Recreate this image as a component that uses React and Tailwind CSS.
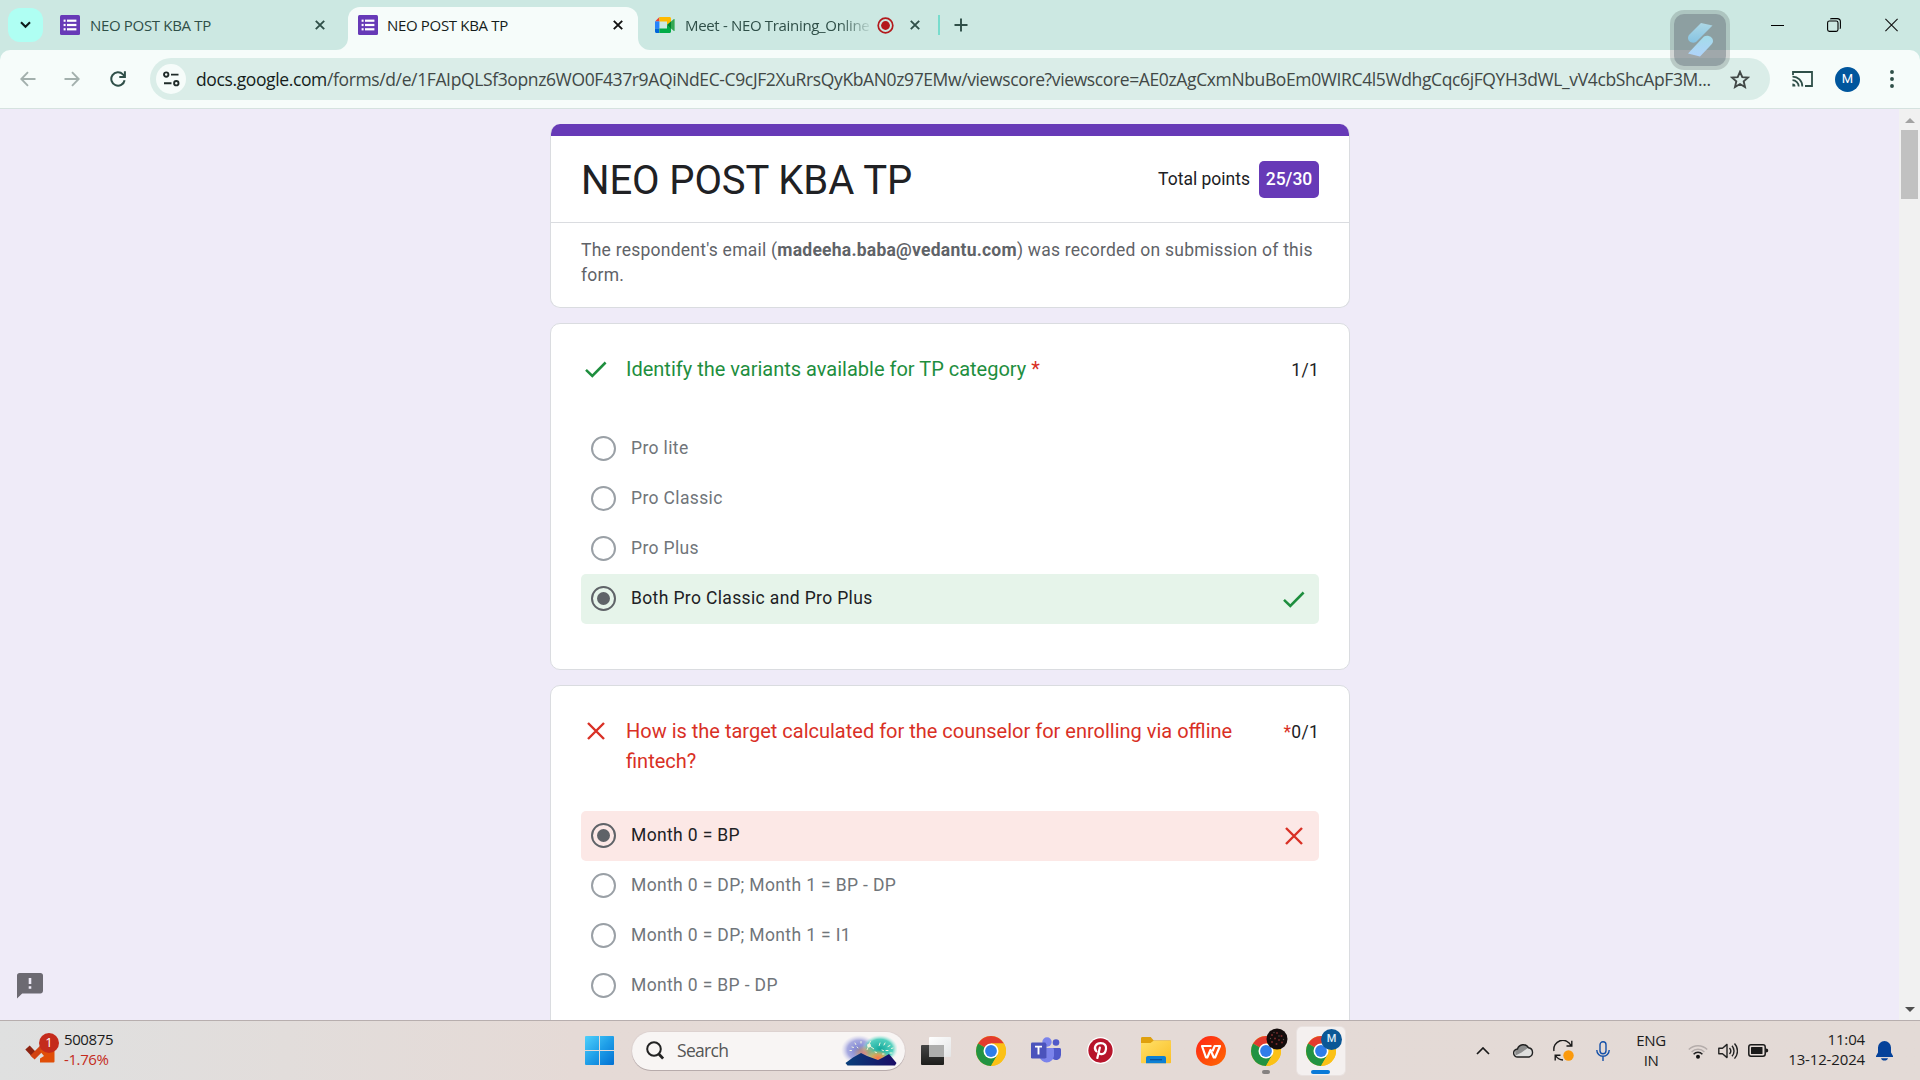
const segoe = "[font-family:'Open_Sans',sans-serif]";

/* ---------- small icons ---------- */

function FormsIcon() {
  return (
    <svg width="20" height="20" viewBox="0 0 20 20" className="shrink-0">
      <rect width="20" height="20" rx="1.5" fill="#673ab7" />
      <g fill="#fff">
        <rect x="3.6" y="4.6" width="2" height="2.2" />
        <rect x="3.6" y="8.9" width="2" height="2.2" />
        <rect x="3.6" y="13.2" width="2" height="2.2" />
        <rect x="7" y="4.6" width="9.4" height="2.2" />
        <rect x="7" y="8.9" width="9.4" height="2.2" />
        <rect x="7" y="13.2" width="9.4" height="2.2" />
      </g>
    </svg>
  );
}

function MeetIcon() {
  return (
    <svg width="20" height="16" viewBox="0 0 20 16" className="shrink-0">
      <path d="M0 4.4 4.4 0v4.4z" fill="#ea4335" />
      <path d="M4.4 0h10.1C15.400 0 16 .6 16 1.500V5l-4 3V4.400H4.400z" fill="#ffba00" />
      <path d="M0 4.400h4.400v7.200H0z" fill="#2684fc" />
      <path d="M0 11.600h4.400V16H1.500C.6 16 0 15.400 0 14.500z" fill="#0066da" />
      <path d="M4.400 11.600H12V8l4 3v3.500c0 .9-.6 1.500-1.500 1.500H4.400z" fill="#00ac47" />
      <path d="M12 8l6.600-5.800c.6-.5 1-.2 1 .4v10.800c0 .6-.4.9-1 .4z" fill="#34a853" />
      <path d="M12 8l4-3.500v7z" fill="#00832d" />
    </svg>
  );
}

function CloseX({ color }) {
  return (
    <svg width="10" height="10" viewBox="0 0 10 10" className="shrink-0">
      <path d="M.8.8 9.200 9.200M9.200.8.8 9.200" stroke={color} strokeWidth="1.900" fill="none" />
    </svg>
  );
}

function Check() {
  return (
    <svg width="22" height="17" viewBox="0 0 22 17" className="shrink-0">
      <path d="M1 8.800 7.300 15 20.600 1.500" fill="none" stroke="#1e8e3e" strokeWidth="2.500" />
    </svg>
  );
}

function Cross() {
  return (
    <svg width="18" height="18" viewBox="0 0 18 18" className="shrink-0">
      <path d="M1 1 17 17M17 1 1 17" fill="none" stroke="#d93025" strokeWidth="2.400" />
    </svg>
  );
}

function Chrome() {
  return (
    <svg width="30" height="30" viewBox="0 0 30 30">
      <circle cx="15" cy="15" r="15" fill="#fbc116" />
      <path d="M15 15 2.010 7.500A15 15 0 0 1 27.990 7.500H15z" fill="#e33b2e" />
      <path d="M15 15 2.010 7.500A15 15 0 0 0 15 30l6.500-11.250z" fill="#229342" />
      <path d="M15 7.500H28A15 15 0 0 1 15 30l6.500-11.250z" fill="#fbc116" />
      <circle cx="15" cy="15" r="7.500" fill="#fff" />
      <circle cx="15" cy="15" r="5.900" fill="#2f7de9" />
    </svg>
  );
}

/* ---------- browser chrome ---------- */

function TabStrip() {
  return (
    <div className="flex h-[50px] items-stretch bg-[#cce8e2] text-[15px] tracking-[-0.33px]">
      <div className="ml-2 mt-2 flex h-[34px] w-[35px] items-center justify-center rounded-[12px] bg-[#affff3]">
        <svg width="11" height="8" viewBox="0 0 11 8">
          <path d="M1 1.200 5.500 5.700 10 1.200" fill="none" stroke="#0d1c1a" strokeWidth="2.100" />
        </svg>
      </div>
      <div className="ml-[17px] flex w-[276px] items-center">
        <FormsIcon />
        <span className="ml-[10px] flex-1 text-[#2f4f48]">NEO POST KBA TP</span>
        <span className="mr-[11px]"><CloseX color="#2f4f48" /></span>
      </div>
      <svg width="12" height="50" viewBox="0 0 12 50" className="shrink-0">
        <path d="M12 38v12H0A12 12 0 0 0 12 38z" fill="#f6fcfa" />
      </svg>
      <div className="mt-[7px] flex w-[290px] items-center rounded-t-[12px] bg-[#f6fcfa] pb-[7px] pl-[10px]">
        <FormsIcon />
        <span className="ml-[9px] flex-1 text-[#151d1b]">NEO POST KBA TP</span>
        <span className="mr-[15px]"><CloseX color="#111" /></span>
      </div>
      <svg width="12" height="50" viewBox="0 0 12 50" className="shrink-0">
        <path d="M0 38v12h12A12 12 0 0 1 0 38z" fill="#f6fcfa" />
      </svg>
      <div className="ml-[5px] flex items-center">
        <MeetIcon />
        <span className="ml-[10px] w-[184px] overflow-hidden whitespace-nowrap text-[#2f4f48] [mask-image:linear-gradient(to_right,black_155px,transparent_188px)]">
          Meet - NEO Training_Online
        </span>
        <svg width="17" height="17" viewBox="0 0 17 17" className="ml-[8px]">
          <circle cx="8.500" cy="8.500" r="7.300" fill="none" stroke="#b3191c" strokeWidth="1.700" />
          <circle cx="8.500" cy="8.500" r="4.400" fill="#b3191c" />
        </svg>
        <span className="ml-[16px] flex"><CloseX color="#2f4f48" /></span>
        <span className="ml-[18px] h-5 w-[2px] bg-[#78dccd]" />
        <svg width="14" height="14" viewBox="0 0 14 14" className="ml-[14px]">
          <path d="M7 .5v13M.5 7h13" stroke="#2f4f48" strokeWidth="1.900" />
        </svg>
      </div>
      <div className="ml-auto flex items-center pb-px pr-[22px]">
        <svg width="13" height="14" viewBox="0 0 13 14">
          <path d="M0 7.500h13" stroke="#000" strokeWidth="1" />
        </svg>
        <svg width="14" height="14" viewBox="0 0 14 14" className="ml-[43px]" fill="none" stroke="#000" strokeWidth="1.100">
          <rect x=".6" y="3" width="10.400" height="10.400" rx="1.800" />
          <path d="M3.200.9Q3.800.6 4.800.6h5.400c2 0 3.200 1.200 3.200 3.200v5.400q0 1-.4 1.600" />
        </svg>
        <svg width="13" height="14" viewBox="0 0 13 14" className="ml-[44px]">
          <path d="M.4.900 12.600 13.100M12.600.9.4 13.100" stroke="#111" strokeWidth="1.100" />
        </svg>
      </div>
    </div>
  );
}

function Toolbar() {
  return (
    <div className="bg-[#cce8e2]">
      <div className="flex h-[59px] items-center rounded-t-[10px] border-b border-[#d5e2df] bg-[#f6fcfa]">
        <svg width="16" height="16" viewBox="0 0 16 16" className="ml-5" fill="none" stroke="#a3b0ad" strokeWidth="1.900">
          <path d="M15.500 8H1.500M8 1.200 1.300 8 8 14.800" />
        </svg>
        <svg width="16" height="16" viewBox="0 0 16 16" className="ml-[28px]" fill="none" stroke="#a3b0ad" strokeWidth="1.900">
          <path d="M.5 8h14M8 1.200 14.700 8 8 14.800" />
        </svg>
        <svg width="16" height="16" viewBox="0 0 16 16" className="ml-[30px]" fill="none" stroke="#2f4f48" strokeWidth="2">
          <path d="M14.600 9.200A6.700 6.700 0 1 1 12.900 3.400L14.800 5.300" />
          <path d="M14.900 .3V6H9.300" />
        </svg>
        <div className="ml-[24px] flex h-[42px] w-[1620px] items-center rounded-full bg-[#daede8]">
          <span className="ml-[6px] flex size-[30px] items-center justify-center rounded-full bg-[#f6fcfa]">
            <svg width="17" height="16" viewBox="0 0 17 16" fill="none" stroke="#1f2b29" strokeWidth="1.900">
              <circle cx="3.200" cy="3.600" r="2.200" />
              <path d="M8 3.600h7.500M1 12.200h7.500" />
              <circle cx="13.300" cy="12.200" r="2.200" />
            </svg>
          </span>
          <span className="ml-[10px] w-[1517px] whitespace-nowrap text-[17.5px] tracking-[-0.375px] text-[#414846]">
            <span className="text-[#151d1b]">docs.google.com</span>
            /forms/d/e/1FAIpQLSf3opnz6WO0F437r9AQiNdEC-C9cJF2XuRrsQyKbAN0z97EMw/viewscore?viewscore=AE0zAgCxmNbuBoEm0WIRC4l5WdhgCqc6jFQYH3dWL_vV4cbShcApF3M...
          </span>
          <svg width="20" height="19" viewBox="0 0 20 19" className="ml-[17px]">
            <path
              d="M10 1.800 12.300 7.100 18 7.600 13.700 11.400 15 17 10 14 5 17 6.300 11.400 2 7.600 7.700 7.100z"
              fill="none" stroke="#414846" strokeWidth="1.900"
            />
          </svg>
        </div>
        <svg width="21" height="16" viewBox="0 0 21 16" className="ml-[22px]" fill="none" stroke="#2f4f48" strokeWidth="1.800">
          <path d="M1 4V1h19v14h-7" />
          <path d="M.5 5.600A9.600 9.600 0 0 1 10.300 15.400M.5 9.200A6.200 6.200 0 0 1 6.700 15.400" />
          <path d="M.4 12.400A3 3 0 0 1 3.400 15.600H.4z" fill="#2f4f48" stroke="none" />
        </svg>
        <span className="ml-[22px] flex size-[25px] items-center justify-center rounded-full bg-[#00569d] text-[13px] text-white [font-family:Roboto,sans-serif]">
          M
        </span>
        <svg width="4" height="18" viewBox="0 0 4 18" className="ml-[30px]" fill="#2f4f48">
          <circle cx="2" cy="2" r="1.950" /><circle cx="2" cy="9" r="1.950" /><circle cx="2" cy="16" r="1.950" />
        </svg>
      </div>
    </div>
  );
}

/* ---------- form ---------- */

function Radio({ checked }) {
  return (
    <span
      className={
        "mb-[2px] flex size-[25px] shrink-0 items-center justify-center rounded-full border-[2.5px] " +
        (checked ? "border-[#5f6368]" : "border-[#9aa0a6]")
      }
    >
      {checked && <span className="size-[13px] rounded-full bg-[#5f6368]" />}
    </span>
  );
}

function Option({ label, result }) {
  const bg = result === "right" ? "bg-[#e6f4ea]" : result === "wrong" ? "bg-[#fce8e6]" : "";
  return (
    <div className={"flex h-[50px] items-center rounded-[5px] pl-[10px] " + bg}>
      <Radio checked={!!result} />
      <span
        className={
          "ml-[15px] flex-1 pb-px text-[17.5px] leading-[25px] tracking-[0.36px] " +
          (result ? "text-[#202124]" : "text-[#70757a]")
        }
      >
        {label}
      </span>
      {result === "right" && <span className="mr-[14px]"><Check /></span>}
      {result === "wrong" && <span className="mb-px mr-[16px]"><Cross /></span>}
    </div>
  );
}

function HeaderCard() {
  return (
    <section className="h-[184px] overflow-hidden rounded-[10px] border border-t-0 border-[#dadce0] bg-white">
      <div className="-mx-px h-3 bg-[#673ab7]" />
      <div className="flex h-[87px] items-center justify-between border-b border-[#dadce0] px-[30px]">
        <h1 className="pt-[3px] text-[40px] leading-[50px] tracking-[-0.1px] text-[#202124]">NEO POST KBA TP</h1>
        <div className="flex items-center text-[17.5px] text-[#202124]">
          <span className="pt-px">Total points</span>
          <span className="ml-[9px] flex h-[37px] w-[60px] items-center justify-center rounded-[5px] bg-[#673ab7] pt-px font-medium text-white">
            25/30
          </span>
        </div>
      </div>
      <p className="px-[30px] pt-[15px] text-[17.5px] leading-[25px] tracking-[0.24px] text-[#5f6368]">
        The respondent's email (<b>madeeha.baba@vedantu.com</b>) was recorded on submission of this form.
      </p>
    </section>
  );
}

function Question({ title, right, star, points, children }) {
  return (
    <section className="mt-[15px] rounded-[10px] border border-[#dadce0] bg-white px-[30px] pb-[45px] pt-[30px]">
      <div className="mb-[35px] flex items-start">
        <span className="flex h-[30px] w-[45px] items-center">
          {right ? <span className="ml-1"><Check /></span> : <span className="ml-[6px]"><Cross /></span>}
        </span>
        <h2 className={"w-[625px] text-[20px] leading-[30px] " + (right ? "text-[#1e8e3e]" : "text-[#d93025]")}>
          {title}
          {right && <span className="text-[#d93025]"> {star}</span>}
        </h2>
        <div className="ml-auto pt-[4px] text-[17.5px] leading-[25px] tracking-[0.25px] text-[#202124]">
          {!right && <span className="text-[#d93025]">{star}</span>}
          {points}
        </div>
      </div>
      {children}
    </section>
  );
}

function FormPage() {
  return (
    <div className="flex h-[911px] overflow-hidden bg-[#efebf8] [font-family:Roboto,sans-serif]">
      <div className="flex w-[550px] items-end pb-[21px] pl-[17px]">
        <svg width="26" height="26" viewBox="0 0 26 26">
          <path d="M2.600 0h20.800C25 0 26 1 26 2.600v15.200c0 1.600-1 2.600-2.600 2.600H5.200L0 25.600V2.600C0 1 1 0 2.600 0z" fill="#6c6a72" />
          <path d="M13 5v6M13 13.200v2.600" stroke="#efebf8" strokeWidth="2.600" />
        </svg>
      </div>
      <main className="w-[800px] pt-[15px]">
        <HeaderCard />
        <Question right title="Identify the variants available for TP category" star="*" points="1/1">
          <div className="pt-[5px]">
            <Option label="Pro lite" />
            <Option label="Pro Classic" />
            <Option label="Pro Plus" />
            <Option label="Both Pro Classic and Pro Plus" result="right" />
          </div>
        </Question>
        <Question title="How is the target calculated for the counselor for enrolling via offline fintech?" star="*" points="0/1">
          <Option label="Month 0 = BP" result="wrong" />
          <Option label="Month 0 = DP; Month 1 = BP - DP" />
          <Option label="Month 0 = DP; Month 1 = I1" />
          <Option label="Month 0 = BP - DP" />
        </Question>
      </main>
      <div className="ml-auto flex w-[21px] flex-col items-center bg-[#f1f1f1]">
        <svg width="10" height="5" viewBox="0 0 10 5" className="mt-[9px] shrink-0">
          <path d="M0 5 5 0l5 5z" fill="#a3a3a3" />
        </svg>
        <div className="mt-[7px] h-[69px] w-[17px] bg-[#c1c1c1]" />
        <svg width="10" height="5" viewBox="0 0 10 5" className="mb-[8px] mt-auto shrink-0">
          <path d="M0 0l5 5 5-5z" fill="#505050" />
        </svg>
      </div>
    </div>
  );
}

/* ---------- taskbar ---------- */

function Slot({ children }) {
  return <div className="relative flex h-[59px] w-[55px] items-center justify-center">{children}</div>;
}

function SearchArt() {
  return (
    <svg width="56" height="31" viewBox="0 0 56 31">
      <defs>
        <radialGradient id="violet"><stop offset="0" stopColor="#6f78cf" /><stop offset=".65" stopColor="#8c90d8" stopOpacity=".75" /><stop offset="1" stopColor="#c9c8ee" stopOpacity="0" /></radialGradient>
        <radialGradient id="teal"><stop offset="0" stopColor="#14a89c" /><stop offset=".7" stopColor="#35c9b4" stopOpacity=".85" /><stop offset="1" stopColor="#a8eadf" stopOpacity="0" /></radialGradient>
        <radialGradient id="glow"><stop offset="0" stopColor="#ff7448" /><stop offset=".5" stopColor="#f0a04a" stopOpacity=".8" /><stop offset="1" stopColor="#e7c05a" stopOpacity="0" /></radialGradient>
        <linearGradient id="hill" x1="0" x2="1"><stop offset="0" stopColor="#093f7a" /><stop offset="1" stopColor="#1a0c66" /></linearGradient>
      </defs>
      <ellipse cx="18" cy="15" rx="18" ry="15" fill="url(#violet)" />
      <ellipse cx="39" cy="14" rx="18" ry="14" fill="url(#teal)" />
      <ellipse cx="24" cy="18" rx="12" ry="8" fill="url(#glow)" opacity=".6" />
      <ellipse cx="37" cy="23" rx="11" ry="8" fill="url(#glow)" />
      <path d="M4.500 28 12 22.500 20 18l6 3 11 4 5-2.500 6-3.500 7.500 9-1.500 2.500H6.500z" fill="url(#hill)" />
      <g stroke="#f4f8df" strokeWidth="1" strokeLinecap="round">
        <path d="M14 8l.8 1.500M20 6.500v1.500M11 12l1.500.4M9 15.500h1.500M16 12l1 .8M39 8l-.8 2.500M44 8l-1 2M49 10.500l-2 1M52 13l-1.500.4M47 15.500h-2M51 18h-2M41 15l1.500.6M34 17l1.500.6M43 19h-1.500" />
      </g>
      <circle cx="28" cy="10.500" r="2" fill="#fbf7dd" opacity=".9" />
      <path d="M28 10.500l5 3.500M28 10l-2 5M28 10l1.500-4" stroke="#fbf7dd" strokeWidth=".9" />
    </svg>
  );
}

function TaskApps() {
  return (
    <div className="flex items-center">
      <svg width="29" height="29" viewBox="0 0 29 29">
        <defs>
          <linearGradient id="win" x1="0" y1="0" x2="1" y2="1"><stop offset="0" stopColor="#4fd0fb" /><stop offset=".5" stopColor="#1f9fe8" /><stop offset="1" stopColor="#0270d2" /></linearGradient>
        </defs>
        <path d="M1 0h13v14H0V1a1 1 0 0 1 1-1zM15 0h13a1 1 0 0 1 1 1v13H15zM0 15h14v14H1a1 1 0 0 1-1-1zM15 15h14v13a1 1 0 0 1-1 1H15z" fill="url(#win)" />
      </svg>
      <div className="ml-[18px] flex h-[38px] w-[273px] items-center rounded-full bg-[#f8f5f4] pl-[14px] pr-[8px] shadow-[0_1px_0_#b7abab,0_0_0_1px_#ddd2d0]">
        <svg width="18" height="19" viewBox="0 0 18 19" fill="none" stroke="#222">
          <circle cx="8" cy="8" r="6.800" strokeWidth="2" />
          <path d="M12.800 13l4.300 4.500" strokeWidth="2.800" />
        </svg>
        <span className="ml-[13px] flex-1 text-[17.5px] tracking-[-0.7px] text-[#555]">Search</span>
        <SearchArt />
      </div>
      <div className="ml-[3px] flex">
        <Slot>
          <svg width="30" height="28" viewBox="0 0 30 28">
            <defs>
              <linearGradient id="tvd" x1="0" y1="0" x2="0" y2="1"><stop offset="0" stopColor="#454545" /><stop offset="1" stopColor="#1d1d1b" /></linearGradient>
              <linearGradient id="tvl" x1="0" y1="0" x2="1" y2="1"><stop offset="0" stopColor="#fff" /><stop offset="1" stopColor="#e4e5e6" /></linearGradient>
            </defs>
            <rect x="0" y="8" width="23" height="20" rx="1" fill="url(#tvd)" />
            <rect x="8" y="0" width="22" height="20" rx="1" fill="url(#tvl)" />
            <path d="M8 8h15v12H8z" fill="#aeaead" />
          </svg>
        </Slot>
        <Slot><Chrome /></Slot>
        <Slot>
          <svg width="30" height="27" viewBox="0 0 30 27">
            <circle cx="25" cy="5.500" r="3.300" fill="#5059c9" />
            <path d="M20 11h8.500c.8 0 1.500.6 1.500 1.500V18a5 5 0 0 1-8 4z" fill="#5059c9" />
            <circle cx="16" cy="5" r="4.700" fill="#7b83eb" />
            <path d="M9 11h12.500c.8 0 1.500.6 1.500 1.500V19a7.300 7.300 0 0 1-14.500 0z" fill="#7b83eb" />
            <path d="M9 7h7v14H9z" fill="#5a62c3" opacity=".6" />
            <rect x="0" y="5.500" width="15" height="16" rx="1.300" fill="#4b53bc" />
            <path d="M4 9.600h7M7.500 9.600v8" stroke="#fff" strokeWidth="1.900" />
          </svg>
        </Slot>
        <Slot>
          <svg width="27" height="27" viewBox="0 0 24 24">
            <circle cx="12" cy="12" r="11.900" fill="#fff" />
            <circle cx="12" cy="12" r="10.800" fill="#b7152b" />
            <path d="M11.400 9.500 9.200 18.600M8.300 12.800C5.400 9.300 8 5.400 12.200 5.400c3.400 0 5.200 2.300 4.700 5.200-.5 3.300-2.300 4.900-4.200 4.700-1.400-.1-2.200-1-2.100-2.100" fill="none" stroke="#fff" strokeWidth="2" strokeLinecap="round" />
          </svg>
        </Slot>
        <Slot>
          <svg width="30" height="27" viewBox="0 0 30 27">
            <defs>
              <linearGradient id="fold" x1="0" y1="0" x2="1" y2="1"><stop offset="0" stopColor="#ffe069" /><stop offset="1" stopColor="#fbbf26" /></linearGradient>
            </defs>
            <path d="M0 1.500C0 .6.500 0 1.300 0h8.400l3 3.500H29c.6 0 1 .4 1 1V10H0z" fill="#dfa00e" />
            <path d="M0 6h9.500l3-2.200H30V25.500c0 .5-.4.8-.8.8H.8a.8.8 0 0 1-.8-.8z" fill="url(#fold)" />
            <path d="M5 26.300V21c0-1.100.8-1.900 1.900-1.900h16.200c1.100 0 1.900.8 1.900 1.900v5.300z" fill="#0d80d4" />
            <path d="M9 22.700h12" stroke="#0a4f96" strokeWidth="1.200" />
          </svg>
        </Slot>
        <Slot>
          <svg width="30" height="30" viewBox="0 0 30 30">
            <defs>
              <linearGradient id="wps" x1="0" y1="0" x2="1" y2="1"><stop offset="0" stopColor="#ff2418" /><stop offset="1" stopColor="#ff6a00" /></linearGradient>
            </defs>
            <circle cx="15" cy="15" r="15" fill="url(#wps)" />
            <path d="M15.500 10H6l4 11.500h1.300L14.500 14l3.300 7.500h1.300L24 10h-5.300l-2.200 5.200" fill="none" stroke="#fff" strokeWidth="2.200" strokeLinejoin="round" />
          </svg>
        </Slot>
        <Slot>
          <Chrome />
          <svg width="22" height="22" viewBox="0 0 22 22" className="absolute left-[28px] top-[7px]">
            <circle cx="11" cy="11" r="10.500" fill="#140c0c" />
            <g fill="#7a2b2b">
              <circle cx="6" cy="7" r="1" /><circle cx="11" cy="5" r=".9" /><circle cx="15.500" cy="8" r="1" /><circle cx="9" cy="10.500" r="1" />
              <circle cx="13" cy="12" r=".9" /><circle cx="6" cy="14" r="1" /><circle cx="10.500" cy="16" r="1" /><circle cx="16" cy="14.500" r=".9" />
            </g>
            <g fill="#57504a"><circle cx="8" cy="4.500" r=".7" /><circle cx="13" cy="8" r=".7" /><circle cx="4.500" cy="10.500" r=".7" /><circle cx="17.500" cy="11.500" r=".7" /></g>
          </svg>
          <span className="absolute left-[23.5px] top-[49px] h-1 w-2 rounded-full bg-[#858180]" />
        </Slot>
        <Slot>
          <div className="flex size-[48px] items-center justify-center rounded-[5px] bg-[#f4f0ef] shadow-[0_0_0_1px_#e9e2e0]">
            <Chrome />
          </div>
          <span className="absolute left-[28px] top-[8px] flex size-[21px] items-center justify-center rounded-full bg-[#0b5796] text-[11px] font-medium text-[#dbe8f3] [font-family:Roboto,sans-serif]">
            M
          </span>
          <span className="absolute left-[18px] top-[49px] h-1 w-[19px] rounded-full bg-[#0a7ad8]" />
        </Slot>
      </div>
    </div>
  );
}

function Tray() {
  return (
    <div className="flex items-center text-[15px] leading-5 tracking-[-0.15px] text-[#1c1c1c]">
      <svg width="14" height="8" viewBox="0 0 14 8"><path d="M1 7l6-6 6 6" fill="none" stroke="#1a1a1a" strokeWidth="1.700" /></svg>
      <svg width="21" height="15" viewBox="0 0 21 15" className="ml-[23px]">
        <path d="M4.700 14A4 4 0 0 1 4.500 6 6 6 0 0 1 15.500 4.800 4.700 4.700 0 0 1 16 14z" fill="#dededd" />
        <path d="M2 6.500 4.500 5.500A6 6 0 0 1 15.500 4.600L8.500 9.500 2.500 12.500z" fill="#8c8c8c" />
        <path d="M4.700 14A4 4 0 0 1 4.500 6 6 6 0 0 1 15.500 4.800 4.700 4.700 0 0 1 16 14z" fill="none" stroke="#222" strokeWidth="1.400" />
      </svg>
      <svg width="21" height="21" viewBox="0 0 21 21" className="ml-[19px]" fill="none" stroke="#1a1a1a" strokeWidth="1.400">
        <path d="M1 11A9 9 0 0 1 18 5.500M18.800.8V6h-5.300" />
        <path d="M2.200 20.500V15.300h5.300M2.500 15.500A9.500 9.500 0 0 0 10 20" />
        <circle cx="15.500" cy="15.500" r="5.200" fill="#fb9a0d" stroke="none" />
      </svg>
      <svg width="14" height="20" viewBox="0 0 14 20" className="ml-[22px]" fill="none" stroke="#1450a8" strokeWidth="1.400">
        <rect x="4" y=".8" width="6" height="12" rx="3" />
        <path d="M.8 9a6.200 6.200 0 0 0 12.400 0M7 15.200V20" />
      </svg>
      <div className="ml-[22px] w-[38px] pb-[2px] text-center tracking-[-0.4px]">ENG<br />IN</div>
      <svg width="20" height="16" viewBox="0 0 20 16" className="ml-[18px]" fill="none" strokeWidth="1.500">
        <path d="M.8 6.500a13 13 0 0 1 18.400 0M3.600 9a9 9 0 0 1 12.800 0" stroke="#b5adab" />
        <path d="M5.600 11.200a6.200 6.200 0 0 1 8.800 0" stroke="#222" />
        <circle cx="10" cy="13.700" r="2" fill="#111" />
      </svg>
      <svg width="20" height="18" viewBox="0 0 20 18" className="ml-[10px]" fill="none" stroke="#222" strokeWidth="1.400">
        <path d="M.8 6.200h3.700L9 2.400v13.200l-4.500-3.800H.8z" strokeLinejoin="round" />
        <path d="M11.500 6a4.500 4.500 0 0 1 0 6M14 3.700a8 8 0 0 1 0 10.600M16.500 1.400a11.200 11.200 0 0 1 0 15.200" />
      </svg>
      <svg width="21" height="13" viewBox="0 0 21 13" className="ml-[10px]">
        <rect x=".8" y=".8" width="16.400" height="11.400" rx="2.200" fill="none" stroke="#1a1a1a" strokeWidth="1.500" />
        <rect x="3" y="3" width="11.500" height="7" rx=".6" fill="#1a1a1a" />
        <path d="M18 4.500c1.600 0 2.200.9 2.200 2s-.6 2-2.200 2z" fill="#1a1a1a" />
      </svg>
      <div className="ml-[17px] w-[79px] whitespace-nowrap pb-[4px] text-right">11:04<br />13-12-2024</div>
      <svg width="17" height="20" viewBox="0 0 17 20" className="ml-[11px]" fill="#05429a">
        <path d="M8.500 0a6.500 6.500 0 0 1 6.500 6.500v5L17 15v1H0v-1l2-3.500v-5A6.500 6.500 0 0 1 8.500 0zM5 17.200h7c-.4 1.500-1.700 2.300-3.500 2.300S5.400 18.700 5 17.200z" />
      </svg>
    </div>
  );
}

function Taskbar() {
  return (
    <footer className="flex h-[60px] items-center border-t border-[#b7aeae] bg-linear-to-r from-[#dfe0e0] via-[#e5dad6] via-30% to-[#e3dad6]">
      <div className="flex w-[585px] items-center pl-[25px]">
        <div className="relative mb-[5px] h-[30px] w-[34px]">
          <svg width="31" height="20" viewBox="0 0 31 20" className="mt-[12px]">
            <path d="M2.500 2.500 10 10.500" stroke="#8e2412" strokeWidth="6" />
            <path d="M7.500 12.500 17 3" stroke="#d24312" strokeWidth="6" />
            <path d="M14 5h15.500v11.500a1 1 0 0 1-1 1H15v-4l4-2.500z" fill="#e04e08" />
          </svg>
          <span className="absolute left-[14px] top-0 flex size-5 items-center justify-center rounded-full bg-[#c42b1c] text-[13px] text-white">
            1
          </span>
        </div>
        <div className="ml-[5px] pb-[4px] text-[15px] leading-5 tracking-[-0.4px] text-[#1c1c1c]">
          500875<br /><span className="text-[#c42b1c]">-1.76%</span>
        </div>
      </div>
      <TaskApps />
      <div className="ml-auto mr-[27px]"><Tray /></div>
    </footer>
  );
}

/* Translucent shortcut that floats above the window frame. */
function FloatingBadge() {
  return (
    <div className="absolute left-[1670px] top-[10px] flex size-[60px] items-center justify-center rounded-[14px] bg-black/15 p-1">
      <div className="flex size-full items-center justify-center rounded-[10px] bg-[#6a7680]/48">
        <svg width="25" height="34" viewBox="0 0 25 34">
          <defs>
            <linearGradient id="sa" x1="0" y1="0" x2="0" y2="1"><stop offset="0" stopColor="#add8e6" /><stop offset="1" stopColor="#86c3e2" /></linearGradient>
            <linearGradient id="sb" x1="0" y1="0" x2="0" y2="1"><stop offset="0" stopColor="#a3dbe8" /><stop offset="1" stopColor="#b0d3fa" /></linearGradient>
          </defs>
          <path d="M13 0 24.500 2.500 8 19C4 21 0 18.500 0 15c0-1.500.6-2.500 1.500-3.500z" fill="url(#sa)" />
          <path d="M12 33.500 0 30.500 16 13.500c4-2 9 .5 9 4.500 0 1.500-.8 2.700-1.600 3.500z" fill="url(#sb)" />
        </svg>
      </div>
    </div>
  );
}

export default function App() {
  return (
    <div className={"relative h-[1080px] w-[1920px] overflow-hidden " + segoe}>
      <TabStrip />
      <Toolbar />
      <FormPage />
      <Taskbar />
      <FloatingBadge />
    </div>
  );
}
